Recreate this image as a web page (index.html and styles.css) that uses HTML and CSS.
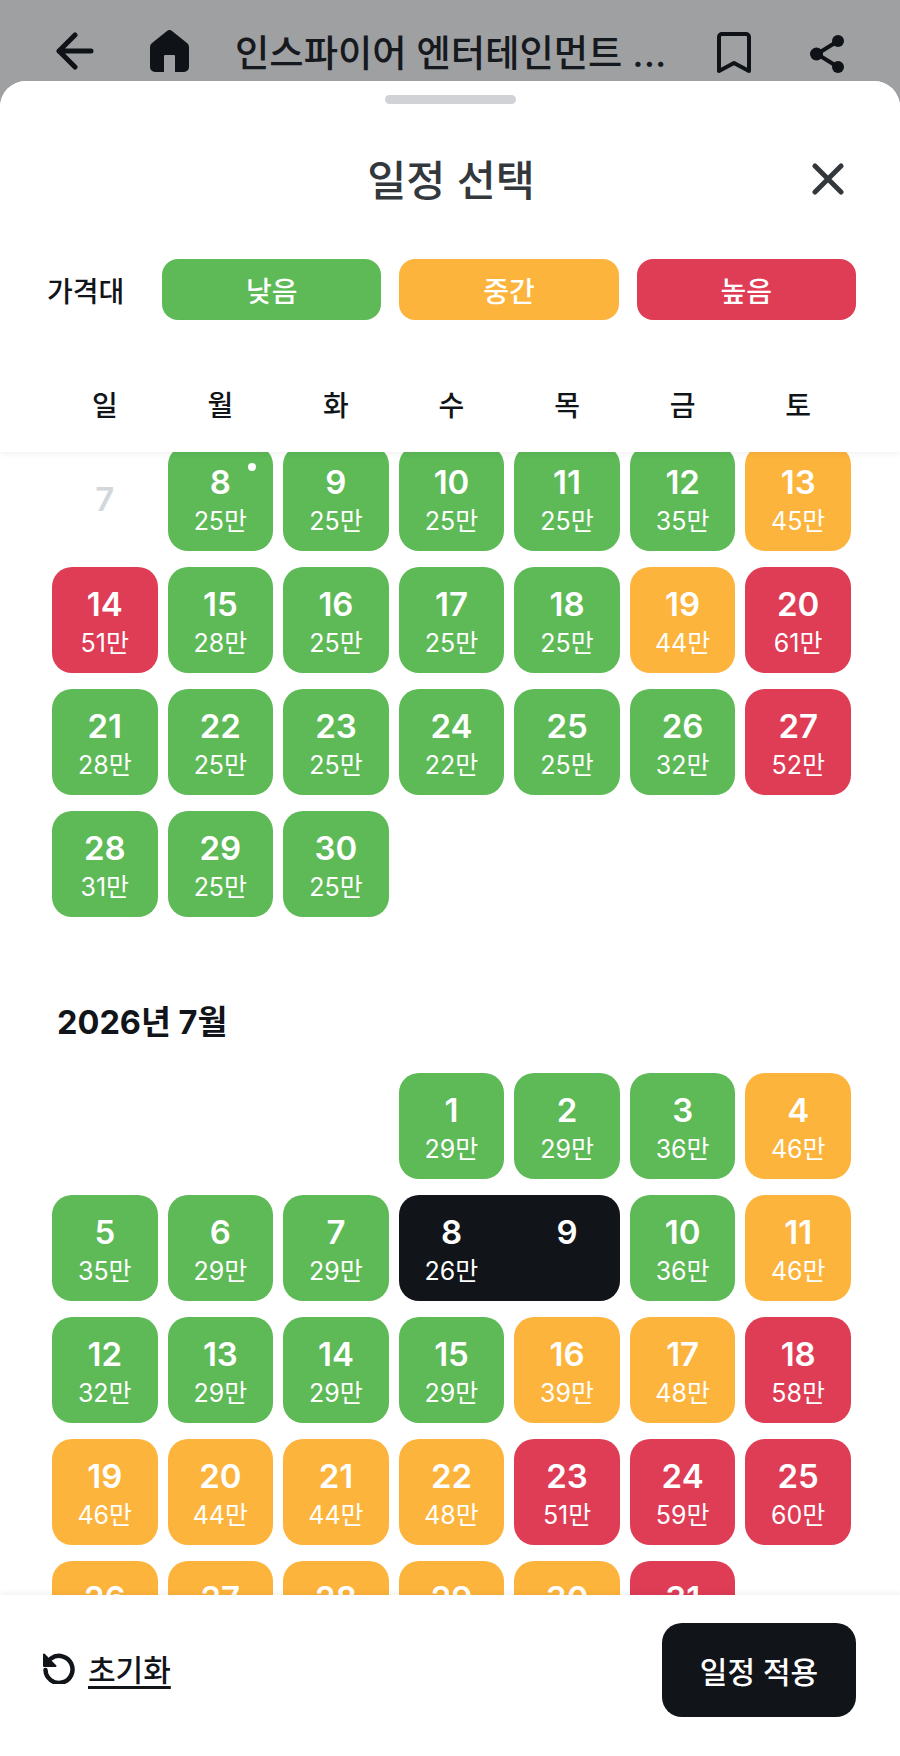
FILE: index.html
```html
<!DOCTYPE html>
<html lang="ko">

<head>
  <meta charset="UTF-8">
  <meta name="viewport" content="width=device-width, initial-scale=1.0">
  <title>일정 선택</title>
  <link rel="stylesheet" href="styles.css">
</head>

<body>
  <div class="topbar">
    <svg class="icon-back" width="38" height="38" viewBox="0 0 38 38"><path d="M35 19H3M19 3 3 19l16 16" fill="none" stroke="#0f1216" stroke-width="5" stroke-linecap="round" stroke-linejoin="round"/></svg>
    <svg class="icon-home" width="39" height="42" viewBox="0 0 39 42"><path d="M17 1a4 4 0 0 1 5 0L37 13a5 5 0 0 1 2 4V37a5 5 0 0 1-5 5H25V26a1 1 0 0 0-1-1H15a1 1 0 0 0-1 1V42H5a5 5 0 0 1-5-5V17a5 5 0 0 1 2-4Z" fill="#0f1216"/></svg>
    <div class="topbar-title">인스파이어 엔터테인먼트 ...</div>
    <svg class="icon-bookmark" width="34" height="42" viewBox="0 0 34 42"><path d="M2 5a3 3 0 0 1 3-3H29a3 3 0 0 1 3 3V39L17 31 2 39Z" fill="none" stroke="#0f1216" stroke-width="4" stroke-linejoin="round"/></svg>
    <svg class="icon-share" width="35" height="38" viewBox="0 0 35 38"><path d="M28 6 7 19 28 32" fill="none" stroke="#0f1216" stroke-width="4"/><circle cx="28" cy="6" r="6" fill="#0f1216"/><circle cx="6.500" cy="19" r="6.500" fill="#0f1216"/><circle cx="28" cy="32" r="6" fill="#0f1216"/></svg>
  </div>

  <div class="sheet">
    <div class="sheet-header">
      <div class="handle"></div>
      <div class="title-row">
        <h2>일정 선택</h2>
        <svg class="icon-close" width="32" height="32" viewBox="0 0 32 32"><path d="M3 3 29 29M29 3 3 29" fill="none" stroke="#33383d" stroke-width="5" stroke-linecap="round"/></svg>
      </div>
      <div class="legend">
        <span class="legend-label">가격대</span>
        <div class="legend-pill low">낮음</div>
        <div class="legend-pill mid">중간</div>
        <div class="legend-pill high">높음</div>
      </div>
      <div class="weekdays">
        <span>일</span><span>월</span><span>화</span><span>수</span><span>목</span><span>금</span><span>토</span>
      </div>
    </div>

    <div class="calendar">
      <div class="days first-month">
        <div class="day past"><b>7</b></div>
        <div class="day low today"><b>8</b><span>25만</span></div>
        <div class="day low"><b>9</b><span>25만</span></div>
        <div class="day low"><b>10</b><span>25만</span></div>
        <div class="day low"><b>11</b><span>25만</span></div>
        <div class="day low"><b>12</b><span>35만</span></div>
        <div class="day mid"><b>13</b><span>45만</span></div>
        <div class="day high"><b>14</b><span>51만</span></div>
        <div class="day low"><b>15</b><span>28만</span></div>
        <div class="day low"><b>16</b><span>25만</span></div>
        <div class="day low"><b>17</b><span>25만</span></div>
        <div class="day low"><b>18</b><span>25만</span></div>
        <div class="day mid"><b>19</b><span>44만</span></div>
        <div class="day high"><b>20</b><span>61만</span></div>
        <div class="day low"><b>21</b><span>28만</span></div>
        <div class="day low"><b>22</b><span>25만</span></div>
        <div class="day low"><b>23</b><span>25만</span></div>
        <div class="day low"><b>24</b><span>22만</span></div>
        <div class="day low"><b>25</b><span>25만</span></div>
        <div class="day low"><b>26</b><span>32만</span></div>
        <div class="day high"><b>27</b><span>52만</span></div>
        <div class="day low"><b>28</b><span>31만</span></div>
        <div class="day low"><b>29</b><span>25만</span></div>
        <div class="day low"><b>30</b><span>25만</span></div>
      </div>

      <h3 class="month-title">2026년 7월</h3>

      <div class="days">
        <div class="day low starts-wed"><b>1</b><span>29만</span></div>
        <div class="day low"><b>2</b><span>29만</span></div>
        <div class="day low"><b>3</b><span>36만</span></div>
        <div class="day mid"><b>4</b><span>46만</span></div>
        <div class="day low"><b>5</b><span>35만</span></div>
        <div class="day low"><b>6</b><span>29만</span></div>
        <div class="day low"><b>7</b><span>29만</span></div>
        <div class="range">
          <div class="range-day"><b>8</b><span>26만</span></div>
          <div class="range-day"><b>9</b></div>
        </div>
        <div class="day low"><b>10</b><span>36만</span></div>
        <div class="day mid"><b>11</b><span>46만</span></div>
        <div class="day low"><b>12</b><span>32만</span></div>
        <div class="day low"><b>13</b><span>29만</span></div>
        <div class="day low"><b>14</b><span>29만</span></div>
        <div class="day low"><b>15</b><span>29만</span></div>
        <div class="day mid"><b>16</b><span>39만</span></div>
        <div class="day mid"><b>17</b><span>48만</span></div>
        <div class="day high"><b>18</b><span>58만</span></div>
        <div class="day mid"><b>19</b><span>46만</span></div>
        <div class="day mid"><b>20</b><span>44만</span></div>
        <div class="day mid"><b>21</b><span>44만</span></div>
        <div class="day mid"><b>22</b><span>48만</span></div>
        <div class="day high"><b>23</b><span>51만</span></div>
        <div class="day high"><b>24</b><span>59만</span></div>
        <div class="day high"><b>25</b><span>60만</span></div>
        <div class="day mid"><b>26</b><span>46만</span></div>
        <div class="day mid"><b>27</b><span>46만</span></div>
        <div class="day mid"><b>28</b><span>46만</span></div>
        <div class="day mid"><b>29</b><span>46만</span></div>
        <div class="day mid"><b>30</b><span>46만</span></div>
        <div class="day high"><b>31</b><span>60만</span></div>
      </div>
    </div>

    <div class="footer">
      <div class="reset">
        <svg width="32" height="32" viewBox="0 0 32 32"><path d="M8 6.500A13.500 13.500 0 1 1 2.500 18" fill="none" stroke="#111418" stroke-width="4.500" stroke-linecap="round"/><path d="M1 2.500V14H12.500Z" fill="#111418" stroke="#111418" stroke-width="2" stroke-linejoin="round"/></svg>
        <span>초기화</span>
      </div>
      <button type="button" class="apply">일정 적용</button>
    </div>
  </div>
</body>

</html>
```

FILE: styles.css
```css
* {
  box-sizing: border-box;
}

body {
  font-family: Inter, "Noto Sans CJK KR", sans-serif;
  background-color: #9fa0a2;
  color: #111418;
  width: 900px;
  height: 1756px;
  margin: 0;
  overflow: hidden;
  display: flex;
  flex-direction: column;
}

.topbar {
  height: 81px;
  flex-shrink: 0;
  display: flex;
  align-items: flex-start;
  padding: 32px 0 0 56px;
}

.icon-home {
  margin-left: 56px;
  margin-top: -2px;
}

.topbar-title {
  width: 431px;
  margin-left: 46px;
  margin-top: -3px;
  font-size: 37.3px;
  font-weight: 500;
  line-height: 50px;
  white-space: nowrap;
  color: #16191d;
}

.icon-bookmark {
  margin-left: 51px;
}

.icon-share {
  margin-left: 59px;
  margin-top: 3px;
}

.sheet {
  flex: 1;
  min-height: 0;
  background-color: #fff;
  border-radius: 26px 26px 0 0;
  display: flex;
  flex-direction: column;
  overflow: hidden;
}

.sheet-header {
  height: 371px;
  flex-shrink: 0;
  position: relative;
  z-index: 1;
  background-color: #fff;
  box-shadow: 0 2px 6px rgba(0, 0, 0, 0.06);
}

.handle {
  width: 131px;
  height: 9px;
  margin: 14px auto 0;
  border-radius: 5px;
  background-color: #d0d2d6;
}

.title-row {
  height: 50px;
  margin-top: 48px;
  display: flex;
  align-items: center;
  justify-content: center;
  position: relative;
}

.title-row h2 {
  margin: 0 0 0 2px;
  font-size: 42.5px;
  font-weight: 500;
  color: #33383d;
}

.icon-close {
  position: absolute;
  right: 56px;
  top: 11px;
}

.legend {
  display: flex;
  align-items: center;
  gap: 18px;
  margin-top: 57px;
  padding: 0 44px 0 47px;
}

.legend-label {
  width: 97px;
  font-size: 28px;
  font-weight: 500;
  white-space: nowrap;
}

.legend-pill {
  flex: 1;
  height: 61px;
  border-radius: 16px;
  color: #fff;
  font-size: 28px;
  font-weight: 500;
  display: flex;
  align-items: center;
  justify-content: center;
}

.low {
  background-color: #5dba57;
}

.mid {
  background-color: #fdb43c;
}

.high {
  background-color: #df3c56;
}

.weekdays {
  display: grid;
  grid-template-columns: repeat(7, 1fr);
  gap: 10px;
  margin-top: 66px;
  padding: 0 49px 0 52px;
  font-size: 28px;
  font-weight: 500;
  line-height: 40px;
  text-align: center;
}

.calendar {
  flex: 1;
  min-height: 0;
  overflow: hidden;
}

.days {
  display: grid;
  grid-template-columns: repeat(7, 1fr);
  grid-auto-rows: 106px;
  gap: 16px 10px;
  padding: 0 49px 0 52px;
}

.first-month {
  margin-top: -7px;
}

.month-title {
  margin: 80px 0 0 57px;
  height: 76px;
  font-size: 32.5px;
  font-weight: 700;
  line-height: 52px;
}

.day,
.range-day {
  color: #fff;
  display: flex;
  flex-direction: column;
  align-items: center;
  justify-content: flex-start;
  padding-top: 17px;
  position: relative;
}

.day {
  border-radius: 20px;
}

.day b,
.range-day b {
  font-size: 33px;
  font-weight: 600;
  line-height: 40px;
}

.day span,
.range-day span {
  margin-top: 2px;
  font-size: 25px;
  line-height: 34px;
  white-space: nowrap;
}

.day.past {
  color: #d3d7dc;
  justify-content: center;
  padding-top: 2px;
}

.today::after {
  content: "";
  position: absolute;
  top: 18px;
  right: 17px;
  width: 8px;
  height: 8px;
  border-radius: 50%;
  background-color: #fff;
}

.starts-wed {
  grid-column-start: 4;
}

.range {
  grid-column: span 2;
  display: grid;
  grid-template-columns: 1fr 1fr;
  column-gap: 10px;
  border-radius: 20px;
  background-color: #111418;
}

.footer {
  height: 161px;
  flex-shrink: 0;
  position: relative;
  z-index: 1;
  background-color: #fff;
  box-shadow: 0 -2px 6px rgba(0, 0, 0, 0.06);
  display: flex;
  align-items: flex-start;
  justify-content: space-between;
  padding: 28px 44px 0 43px;
}

.reset {
  display: flex;
  align-items: center;
  gap: 13px;
  height: 90px;
  font-size: 30px;
  font-weight: 500;
}

.reset span {
  text-decoration: underline;
  text-decoration-thickness: 3px;
  text-underline-offset: 5px;
}

.apply {
  width: 194px;
  height: 94px;
  border: none;
  border-radius: 20px;
  background-color: #111418;
  color: #fff;
  font-family: inherit;
  font-size: 30px;
  font-weight: 500;
}
```
